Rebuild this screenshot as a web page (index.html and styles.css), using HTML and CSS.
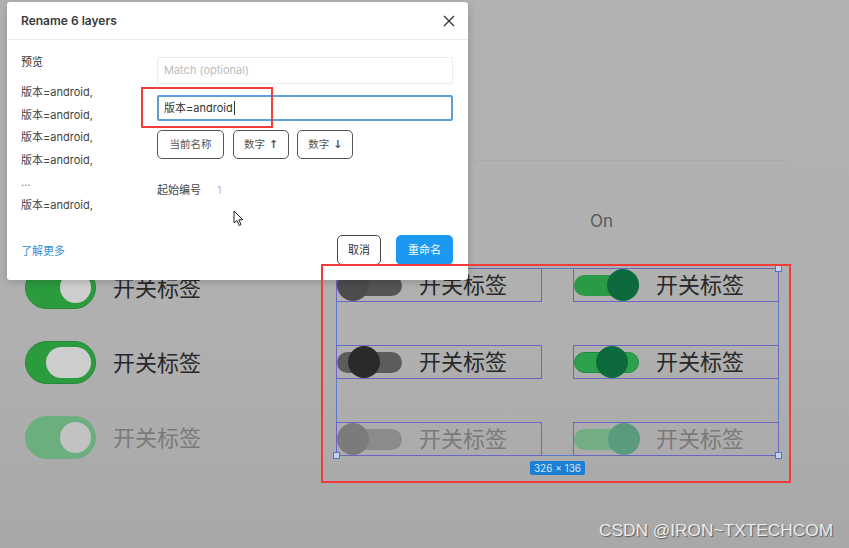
FILE: index.html
```html
<!doctype html>
<html>

<head>
    <title>Rename layers</title>
    <link rel="stylesheet" href="styles.css">
</head>

<body>
    <div class="page">
        <section class="canvas">
            <div class="divider"></div>
            <div class="on">On</div>
            <div class="board">
                <div class="left-col">
                    <div class="item">
                        <span class="tg"><span class="tg-knob"></span></span>
                        <span class="label">开关标签</span>
                    </div>
                    <div class="item">
                        <span class="tg"><span class="tg-knob wide"></span></span>
                        <span class="label">开关标签</span>
                    </div>
                    <div class="item faded">
                        <span class="tg"><span class="tg-knob"></span></span>
                        <span class="label">开关标签</span>
                    </div>
                </div>

                <div class="selection">
                    <div class="box">
                        <span class="sw off-1"><span class="knob"></span></span>
                        <span class="label">开关标签</span>
                    </div>
                    <div class="box">
                        <span class="sw on-1"><span class="knob"></span></span>
                        <span class="label">开关标签</span>
                    </div>
                    <div class="box">
                        <span class="sw off-2"><span class="knob"></span></span>
                        <span class="label">开关标签</span>
                    </div>
                    <div class="box">
                        <span class="sw on-2"><span class="knob"></span></span>
                        <span class="label">开关标签</span>
                    </div>
                    <div class="box faded">
                        <span class="sw off-3"><span class="knob"></span></span>
                        <span class="label">开关标签</span>
                    </div>
                    <div class="box faded">
                        <span class="sw on-3"><span class="knob"></span></span>
                        <span class="label">开关标签</span>
                    </div>
                    <span class="handle h-tl"></span>
                    <span class="handle h-tr"></span>
                    <span class="handle h-bl"></span>
                    <span class="handle h-br"></span>
                    <span class="size-badge">326 × 136</span>
                </div>
            </div>
        </section>

        <div class="dialog">
            <div class="dlg-head">
                <span class="dlg-title">Rename 6 layers</span>
                <svg class="close" width="12" height="12" viewBox="0 0 12 12">
                    <path d="M1 1L11 11M11 1L1 11" stroke="#333" stroke-width="1.3" fill="none" />
                </svg>
            </div>
            <div class="dlg-body">
                <div class="preview">
                    <div class="preview-title">预览</div>
                    <div class="preview-list">
                        <div>版本=android,</div>
                        <div>版本=android,</div>
                        <div>版本=android,</div>
                        <div>版本=android,</div>
                        <div class="dots">...</div>
                        <div>版本=android,</div>
                    </div>
                </div>
                <div class="fields">
                    <div class="field placeholder">Match (optional)</div>
                    <div class="field active">版本=android<span class="caret"></span></div>
                    <div class="chips">
                        <span class="chip">当前名称</span>
                        <span class="chip">数字 <span class="arr">↑</span></span>
                        <span class="chip">数字 <span class="arr">↓</span></span>
                    </div>
                    <div class="start">
                        <span>起始编号</span>
                        <span class="start-num">1</span>
                    </div>
                </div>
            </div>
            <div class="dlg-foot">
                <a class="learn">了解更多</a>
                <div class="actions">
                    <span class="btn">取消</span>
                    <span class="btn primary">重命名</span>
                </div>
            </div>
        </div>

        <!-- mouse pointer -->
        <svg class="pointer" width="11" height="17" viewBox="0 0 11 17">
            <path d="M1 1L1 13L4 10.5L6.2 15.5L8 14.7L5.9 9.8L9.8 9.8Z" fill="#fff" stroke="#222" stroke-width="1" stroke-linejoin="round" />
        </svg>

        <div class="mark mark-input"></div>
        <div class="mark mark-group"></div>

        <div class="watermark">CSDN @IRON~TXTECHCOM</div>
    </div>
</body>

</html>
```

FILE: styles.css
```css
body,
html {
    margin: 0;
    padding: 0;
}

* {
    box-sizing: border-box;
    font-family: Inter, "Noto Sans CJK SC", sans-serif;
}

.page {
    position: relative;
    width: 849px;
    height: 548px;
    overflow: hidden;
    background: linear-gradient(#b2b2b2, #b0b0b0 60%, #a8a8a8);
}

/* canvas behind the dialog */

.canvas {
    padding: 160px 0 0 25px;
}

.divider {
    margin-left: 450px;
    width: 310px;
    height: 1px;
    background: #aaaaaa;
}

.on {
    margin: 48px 0 0 565px;
    font-size: 17px;
    line-height: 24px;
    color: #5a5a5a;
}

.board {
    display: flex;
    margin-top: 33px;
}

.left-col {
    width: 311px;
    display: flex;
    flex-direction: column;
    gap: 32px;
}

.item {
    display: flex;
    align-items: center;
}

.label {
    margin-left: 17px;
    font-size: 22px;
    line-height: 26px;
    color: #282828;
}

.faded .label {
    color: #7a7a7a;
}

.tg {
    position: relative;
    width: 71px;
    height: 43px;
    border-radius: 22px;
    background: #2c9b3e;
    border: 1px solid #22883a;
}

.tg-knob {
    position: absolute;
    right: 4px;
    top: 5px;
    width: 31px;
    height: 31px;
    border-radius: 16px;
    background: #cecece;
}

.tg-knob.wide {
    width: 45px;
}

.faded .tg {
    background: #6caf7e;
    border-color: #6caf7e;
}

.faded .tg-knob {
    background: #c2c2c2;
}

/* selected group */

.selection {
    position: relative;
    margin-top: 2px;
    width: 443px;
    height: 188px;
    display: grid;
    grid-template-columns: 206px 206px;
    grid-auto-rows: 34px;
    column-gap: 31px;
    row-gap: 43px;
    box-shadow: inset 0 0 0 1px #5a7cd0;
}

.box {
    display: flex;
    align-items: center;
    border: 1px solid #6a66c4;
}

.box .label {
    margin-left: 17px;
}

.sw {
    position: relative;
    width: 65px;
    height: 21px;
    border-radius: 11px;
    flex-shrink: 0;
}

.sw .knob {
    position: absolute;
    top: 50%;
    width: 32px;
    height: 32px;
    margin-top: -16px;
    border-radius: 50%;
}

.off-1 { background: #545454; }
.off-1 .knob { left: 0; background: #4c4c4c; }

.off-2 { background: #5c5c5c; }
.off-2 .knob { left: 11px; background: #2a2a2a; }

.off-3 { background: #8b8b8b; }
.off-3 .knob { left: 0; background: #7b7b7b; }

.on-1 { background: #2b9a46; }
.on-1 .knob { left: 33px; background: #0c6a3c; }

.on-2 { background: #2ba24b; border: 1px solid #1f8a3a; }
.on-2 .knob { left: 21px; background: #0c6a3c; }

.on-3 { background: #72ad83; }
.on-3 .knob { left: 34px; background: #5b9a7c; }

.handle {
    position: absolute;
    width: 7px;
    height: 7px;
    border: 1px solid #4a78d0;
    background: #c6d4ea;
}

.h-tl { left: -3px; top: -3px; }
.h-tr { right: -3px; top: -3px; }
.h-bl { left: -3px; bottom: -3px; }
.h-br { right: -3px; bottom: -3px; }

.size-badge {
    position: absolute;
    top: 193px;
    left: 194px;
    width: 55px;
    height: 14px;
    border-radius: 2px;
    background: #1c7fd4;
    color: #d6e6f6;
    font-size: 10px;
    line-height: 14px;
    text-align: center;
}

/* dialog */

.dialog {
    position: absolute;
    left: 7px;
    top: 2px;
    width: 461px;
    height: 278px;
    background: #ffffff;
    border-radius: 3px;
    box-shadow: 0 2px 8px rgba(0, 0, 0, 0.18);
    display: flex;
    flex-direction: column;
}

.dlg-head {
    height: 38px;
    padding: 0 13px 0 14px;
    border-bottom: 1px solid #ececec;
    display: flex;
    align-items: center;
    justify-content: space-between;
}

.dlg-title {
    font-size: 12px;
    font-weight: 600;
    color: #3a3a3a;
}

.dlg-body {
    display: flex;
    padding-left: 14px;
    padding-right: 15px;
}

.preview {
    width: 136px;
    padding-top: 14px;
    font-size: 11px;
    color: #444;
}

.preview-title {
    line-height: 16px;
    color: #333;
}

.preview-list {
    margin-top: 11px;
    line-height: 22.5px;
}

.dots {
    color: #888;
}

.fields {
    flex: 1;
    padding-top: 17px;
}

.field {
    height: 27px;
    border: 1px solid #ececec;
    border-radius: 2px;
    padding-left: 6px;
    font-size: 11px;
    line-height: 25px;
    color: #333;
}

.field.placeholder {
    color: #bcbcbc;
}

.field.active {
    margin-top: 11px;
    height: 26px;
    border: 2px solid #5a9edb;
    line-height: 22px;
    padding-left: 5px;
}

.caret {
    display: inline-block;
    width: 1.5px;
    height: 14px;
    margin-left: 1px;
    vertical-align: -3px;
    background: #333;
}

.chips {
    display: flex;
    gap: 8px;
    margin-top: 9px;
}

.chip {
    height: 29px;
    padding: 0 10px;
    border: 1px solid #555;
    border-radius: 5px;
    font-size: 10.5px;
    line-height: 27px;
    color: #555;
}

.chip:first-child {
    padding: 0 11.5px;
    margin-right: 1px;
}

.arr {
    font-family: "DejaVu Sans", sans-serif;
    font-size: 11px;
    font-weight: bold;
    margin-left: 1px;
}

.start {
    margin-top: 23px;
    font-size: 11px;
    line-height: 16px;
    color: #444;
}

.start-num {
    margin-left: 13px;
    color: #bbb;
}

.dlg-foot {
    margin-top: auto;
    padding: 0 15px 15px 14px;
    display: flex;
    align-items: center;
    justify-content: space-between;
}

.learn {
    font-size: 11px;
    color: #3a8fd8;
}

.actions {
    display: flex;
    gap: 15px;
}

.btn {
    height: 30px;
    padding: 0 10px;
    border: 1px solid #444;
    border-radius: 5px;
    font-size: 11px;
    line-height: 28px;
    color: #333;
}

.btn.primary {
    background: #1a98f2;
    border-color: #1a98f2;
    color: #fff;
    padding: 0 11px;
}

/* overlays */

.pointer {
    position: absolute;
    left: 233px;
    top: 210px;
}

.mark {
    position: absolute;
    border: 2.5px solid #f23b3b;
}

.mark-input {
    left: 141px;
    top: 87px;
    width: 132px;
    height: 41px;
}

.mark-group {
    left: 321px;
    top: 264px;
    width: 470px;
    height: 219px;
}

.watermark {
    position: absolute;
    left: 599px;
    top: 519px;
    font-family: "Liberation Sans", Arial, sans-serif;
    font-size: 17.3px;
    line-height: 22px;
    color: #ececec;
    text-shadow: 1px 1px 1px rgba(0, 0, 0, 0.45);
}
```
